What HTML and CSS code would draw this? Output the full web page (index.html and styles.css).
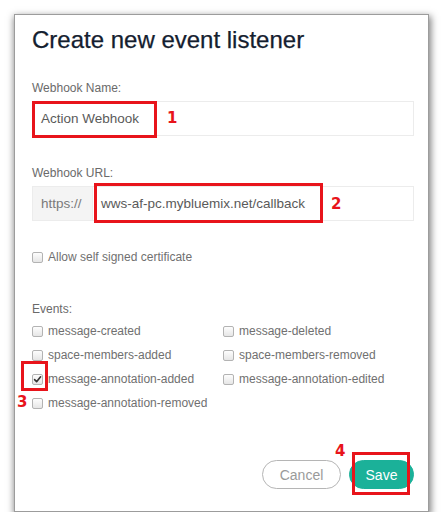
FILE: index.html
```html
<!DOCTYPE html>
<html>
<head>
<meta charset="utf-8">
<link rel="stylesheet" href="styles.css">
</head>
<body>
<div class="dialog">
  <h1 class="title">Create new event listener</h1>

  <div class="field">
    <div class="label">Webhook Name:</div>
    <div class="input">Action Webhook</div>
  </div>

  <div class="field field-url">
    <div class="label">Webhook URL:</div>
    <div class="group">
      <div class="addon">https://</div>
      <div class="input input-grow">wws-af-pc.mybluemix.net/callback</div>
    </div>
  </div>

  <label class="check check-allow"><span class="box"></span><span>Allow self signed certificate</span></label>

  <div class="label label-events">Events:</div>
  <div class="events">
    <label class="check"><span class="box"></span><span>message-created</span></label>
    <label class="check"><span class="box"></span><span>message-deleted</span></label>
    <label class="check"><span class="box"></span><span>space-members-added</span></label>
    <label class="check"><span class="box"></span><span>space-members-removed</span></label>
    <label class="check"><span class="box box-checked"><svg viewBox="0 0 11 11" width="11" height="11"><path d="M2.6 5.6 L4.6 7.7 L8.6 2.8" fill="none" stroke="#333" stroke-width="1.6" stroke-linecap="round" stroke-linejoin="round"/></svg></span><span>message-annotation-added</span></label>
    <label class="check"><span class="box"></span><span>message-annotation-edited</span></label>
    <label class="check"><span class="box"></span><span>message-annotation-removed</span></label>
  </div>

  <div class="footer">
    <button class="btn btn-cancel">Cancel</button>
    <button class="btn btn-save">Save</button>
  </div>

  <span class="mark mark-1"></span><span class="num num-1">1</span>
  <span class="mark mark-2"></span><span class="num num-2">2</span>
  <span class="mark mark-3"></span><span class="num num-3">3</span>
  <span class="mark mark-4"></span><span class="num num-4">4</span>
</div>
</body>
</html>
```

FILE: styles.css
```css
html, body {
  margin: 0;
  padding: 0;
  background: #ffffff;
}
body {
  padding: 14px 0 0 14px;
  font-family: "Liberation Sans", Arial, sans-serif;
}
.dialog {
  position: relative;
  box-sizing: border-box;
  width: 415px;
  height: 498px;
  background: #fff;
  border: 1px solid #9c9c9c;
  box-shadow: 1px 3px 7px 1px rgba(0, 0, 0, 0.5);
  padding: 11px 14px 0 17px;
  display: flex;
  flex-direction: column;
}
.title {
  margin: 0;
  font-size: 24px;
  line-height: 28px;
  font-weight: normal;
  color: #14202f;
  letter-spacing: 0;
  -webkit-text-stroke: 0.25px #14202f;
}
.field {
  margin-top: 27px;
}
.field-url {
  margin-top: 30px;
}
.label {
  font-size: 12px;
  line-height: 14px;
  color: #6a6a6a;
  margin-bottom: 6px;
}
.input {
  box-sizing: border-box;
  height: 35px;
  border: 1px solid #ececec;
  padding: 0 8px;
  font-size: 13.5px;
  line-height: 33px;
  color: #5a5a5a;
  white-space: nowrap;
}
.group {
  display: flex;
}
.addon {
  box-sizing: border-box;
  width: 60px;
  height: 35px;
  background: #f4f4f4;
  border: 1px solid #ececec;
  border-right: none;
  padding-left: 8px;
  font-size: 13.5px;
  line-height: 33px;
  color: #7a7a7a;
}
.input-grow {
  flex: 1;
}
.check {
  display: flex;
  align-items: center;
  height: 16px;
  font-size: 12px;
  color: #707070;
  white-space: nowrap;
}
.check-allow {
  margin-top: 28px;
}
.box {
  box-sizing: border-box;
  width: 11px;
  height: 11px;
  margin-right: 5px;
  border: 1px solid #b3b3b3;
  border-radius: 2px;
  background: linear-gradient(#fdfdfd, #e6e6e6);
  display: flex;
  align-items: center;
  justify-content: center;
  flex: none;
}
.box svg {
  display: block;
  margin: -1px;
}
.label-events {
  margin-top: 37px;
  margin-bottom: 7px;
}
.events {
  display: grid;
  grid-template-columns: 191px 1fr;
  row-gap: 8px;
}
.footer {
  margin-top: 49px;
  display: flex;
  justify-content: flex-end;
  gap: 8px;
}
.btn {
  box-sizing: border-box;
  height: 29px;
  border-radius: 15px;
  font-family: "Liberation Sans", Arial, sans-serif;
  font-size: 14px;
  padding: 0;
  cursor: pointer;
}
.btn-cancel {
  width: 79px;
  background: #fff;
  border: 1px solid #b5b5b5;
  color: #9a9a9a;
}
.btn-save {
  width: 65px;
  background: #1bb199;
  border: 1px solid #1bb199;
  color: #fff;
}
.mark {
  position: absolute;
  box-sizing: border-box;
  border: 3px solid #e8141b;
}
.num {
  position: absolute;
  font-family: "DejaVu Sans", sans-serif;
  font-weight: bold;
  font-size: 15px;
  line-height: 15px;
  color: #e8141b;
}
.mark-1 { left: 17px; top: 86px; width: 125px; height: 37px; }
.num-1 { left: 152px; top: 96px; }
.mark-2 { left: 79px; top: 168px; width: 229px; height: 40px; }
.num-2 { left: 316px; top: 182px; }
.mark-3 { left: 6px; top: 346px; width: 27px; height: 30px; }
.num-3 { left: 2px; top: 380px; }
.mark-4 { left: 337px; top: 437px; width: 58px; height: 43px; }
.num-4 { left: 320px; top: 429px; }
```
